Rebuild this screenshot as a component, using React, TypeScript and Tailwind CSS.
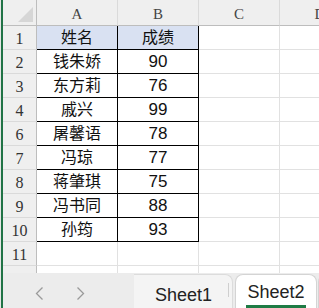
const cols = ['A', 'B', 'C', 'D'];

const rows: { n: number; a?: string; b?: string; head?: boolean }[] = [
  { n: 1, a: '姓名', b: '成绩', head: true },
  { n: 2, a: '钱朱娇', b: '90' },
  { n: 3, a: '东方莉', b: '76' },
  { n: 4, a: '戚兴', b: '99' },
  { n: 6, a: '屠馨语', b: '78' },
  { n: 7, a: '冯琼', b: '77' },
  { n: 8, a: '蒋肇琪', b: '75' },
  { n: 9, a: '冯书同', b: '88' },
  { n: 10, a: '孙筠', b: '93' },
  { n: 11 },
  { n: 12 },
];

const serif = "font-['Liberation_Serif',serif]";
const cellFont = "font-['Liberation_Sans','Noto_Sans_CJK_SC',sans-serif]";

function Chevron({ right }: { right?: boolean }) {
  return (
    <svg width="9" height="13" viewBox="0 0 9 13">
      <path
        d={right ? 'M1.5 0.5 L7.5 6.5 L1.5 12.5' : 'M7.5 0.5 L1.5 6.5 L7.5 12.5'}
        fill="none"
        stroke="#9a9a9a"
        strokeWidth="1.3"
      />
    </svg>
  );
}

export default function App() {
  return (
    <div className="flex w-[319px] h-[308px] overflow-hidden bg-white">
      {/* 窗口左边缘 */}
      <div className="w-px shrink-0 bg-[#e6e6e6]" />
      <div className="w-[2px] shrink-0 bg-[#217346]" />

      <div className="flex-1 flex flex-col min-w-0">
        {/* 表格区域 */}
        <div className="h-[273px] overflow-hidden">
          <div className="grid w-max grid-cols-[34px_81px_81px_81px_81px]">
            {/* 列标题 */}
            <div className="h-[26px] bg-[#efefef] border-r border-b border-[#bdbdbd]">
              <svg width="33" height="25">
                <polygon points="30,7 30,22 15,22" fill="#d6d6d6" />
              </svg>
            </div>
            {cols.map((c) => (
              <div
                key={c}
                className={`h-[26px] bg-[#efefef] border-r border-r-[#dadada] border-b border-b-[#bdbdbd] flex justify-center pt-[7px] text-[15px] leading-[15px] text-[#444] ${serif}`}
              >
                {c}
              </div>
            ))}

            {rows.map((r) => {
              const inTable = r.a !== undefined;
              const tableBorder = inTable ? 'border-black' : 'border-[#e1e1e1]';
              return (
                <div key={r.n} className="contents">
                  <div
                    className={`h-[24px] bg-[#efefef] border-r border-r-[#bdbdbd] border-b border-b-[#dadada] flex justify-center items-center pt-[2px] text-[16px] leading-[16px] text-[#333] ${serif}`}
                  >
                    {r.n}
                  </div>
                  <div
                    className={`h-[24px] border-r border-b ${tableBorder} ${r.head ? 'bg-[#d9e1f2]' : ''} flex justify-center items-center text-[16px] leading-[16px] text-[#111] ${cellFont}`}
                  >
                    {r.a}
                  </div>
                  <div
                    className={`h-[24px] border-r border-b ${tableBorder} ${r.head ? 'bg-[#d9e1f2]' : ''} flex justify-center items-center ${r.head ? 'text-[16px]' : 'text-[17px]'} leading-[17px] text-[#111] ${cellFont}`}
                  >
                    {r.b}
                  </div>
                  <div className="h-[24px] border-r border-b border-[#e1e1e1]" />
                  <div className="h-[24px] border-r border-b border-[#e1e1e1]" />
                </div>
              );
            })}
          </div>
        </div>

        {/* 工作表标签栏 */}
        <div className={`h-[35px] bg-[#ececec] flex items-end overflow-hidden ${cellFont}`}>
          <div className="w-[131px] shrink-0 h-full flex items-start pt-[14px] pl-[32px] gap-[32px]">
            <Chevron />
            <Chevron right />
          </div>
          <div className="w-[99px] shrink-0 h-[34px] bg-[#f4f4f4] border-t border-r border-[#dcdcdc] rounded-tr-lg flex items-start pt-[11px] pl-[21px]">
            <span className="text-[18px] leading-[18px] text-[#222]">Sheet1</span>
            <div className="ml-auto mr-[3px] mt-[-3px] w-px h-[14px] bg-[#cfcfcf]" />
          </div>
          <div className="ml-[2px] w-[82px] shrink-0 h-[34px] bg-white border-t border-x border-[#d4d4d4] rounded-t-lg flex flex-col items-center pt-[8px]">
            <span className="text-[18px] leading-[18px] text-[#222]">Sheet2</span>
            <div className="mt-[4px] w-[60px] h-[3px] bg-[#1e7b45]" />
          </div>
          <div className="ml-[1px] w-[40px] shrink-0 h-[34px] bg-white border-t border-l border-[#d4d4d4] rounded-tl-lg" />
        </div>
      </div>
    </div>
  );
}
